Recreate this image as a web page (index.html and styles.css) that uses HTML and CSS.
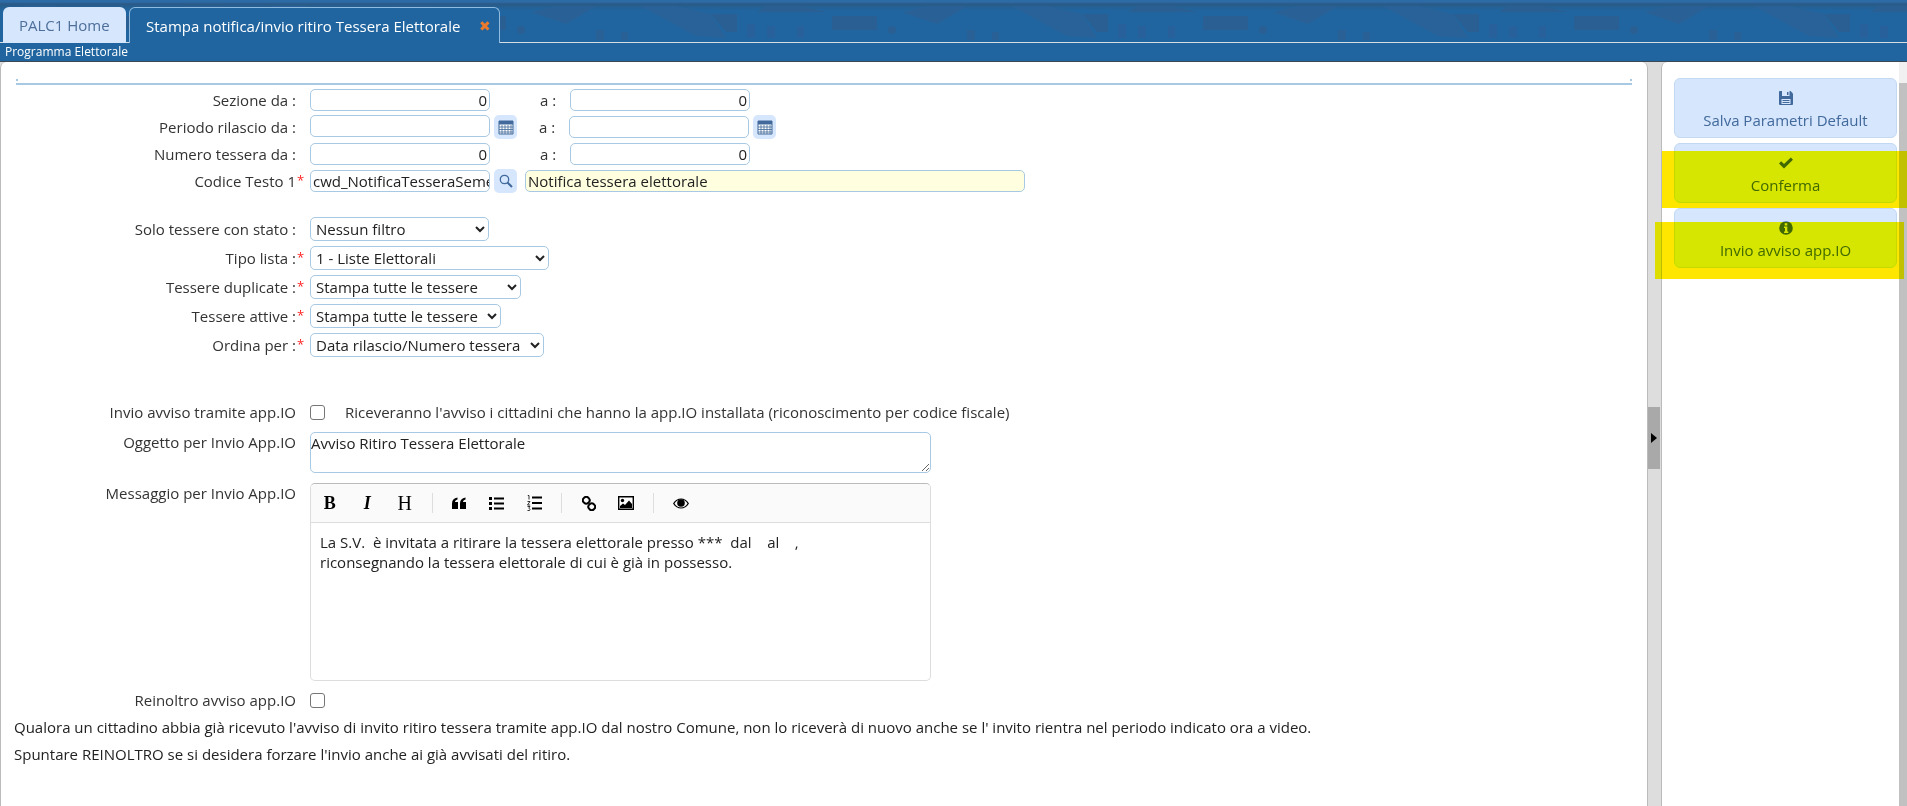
FILE: index.html
```html
<!DOCTYPE html>
<html lang="it">
<head>
<meta charset="utf-8">
<title>Stampa notifica/invio ritiro Tessera Elettorale</title>
<link rel="stylesheet" href="styles.css">
</head>
<body>
<header class="top">
  <svg class="texture" width="1907" height="42" aria-hidden="true">
    <defs>
      <pattern id="houses" width="371" height="42" patternUnits="userSpaceOnUse" x="-5">
        <path d="M20 12 L90 12 L60 5 L30 5 Z" fill="#2a5f92"/>
        <path d="M10 24h8v14h-8zM30 26h8v12h-8zM60 26h7v12h-7z" fill="#28609a"/>
        <path d="M95 16h45v14h-45z" fill="#2a5f92"/>
        <circle cx="155" cy="30" r="4" fill="#2a5f92"/>
        <path d="M165 12 L190 6 L230 6 L200 24 Z" fill="#2a6096"/>
        <path d="M230 30h8v10h-8zM255 32h7v8h-7z" fill="#2a6096"/>
        <path d="M275 6 L310 6 L345 14 L360 38 L330 36 Z" fill="#2a6299"/>
        <path d="M345 14 L371 14 L371 32 L360 32 Z" fill="#2a5f92"/>
      </pattern>
    </defs>
    <rect width="1907" height="42" fill="url(#houses)"/>
  </svg>
  <nav class="tabs">
    <a class="tab tab-home">PALC1 Home</a>
    <a class="tab tab-active">Stampa notifica/invio ritiro Tessera Elettorale<span class="tab-close">✖</span></a>
  </nav>
</header>
<div class="subbar">Programma Elettorale</div>
<main class="workspace">
  <section class="form-panel">
    <div class="rule"></div>
    <div class="rows-top">
      <div class="row">
        <label class="lbl">Sezione da :</label>
        <div class="cell"><input class="inp inp-num" value="0"></div>
        <span class="a">a :</span>
        <input class="inp inp-num" value="0">
      </div>
      <div class="row">
        <label class="lbl">Periodo rilascio da :</label>
        <div class="cell cell-narrow"><input class="inp"><button class="ico-btn"><svg width="16" height="15" viewBox="0 0 16 15"><path d="M1 1h14v13H1z" fill="#fff" stroke="#41699b"/><path d="M1 1h14v3.500H1z" fill="#41699b"/><path d="M1 7h14M1 9.500h14M1 12h14M4 5v9M7 5v9M10 5v9M13 5v9" stroke="#41699b" stroke-width=".8"/></svg></button></div>
        <span class="a">a :</span>
        <input class="inp"><button class="ico-btn"><svg width="16" height="15" viewBox="0 0 16 15"><path d="M1 1h14v13H1z" fill="#fff" stroke="#41699b"/><path d="M1 1h14v3.500H1z" fill="#41699b"/><path d="M1 7h14M1 9.500h14M1 12h14M4 5v9M7 5v9M10 5v9M13 5v9" stroke="#41699b" stroke-width=".8"/></svg></button>
      </div>
      <div class="row">
        <label class="lbl">Numero tessera da :</label>
        <div class="cell"><input class="inp inp-num" value="0"></div>
        <span class="a">a :</span>
        <input class="inp inp-num" value="0">
      </div>
      <div class="row">
        <label class="lbl">Codice Testo 1<span class="star">*</span></label>
        <input class="inp inp-code" value="cwd_NotificaTesseraSemestrale"><button class="ico-btn"><svg width="14" height="14" viewBox="0 0 14 14" fill="none" stroke="#41699b"><circle cx="5.500" cy="5.500" r="4.200" stroke-width="1.300"/><path d="M8.500 8.500L13 13" stroke-width="2"/></svg></button>
        <input class="inp inp-desc" value="Notifica tessera elettorale">
      </div>
    </div>
    <div class="rows-select">
      <div class="row row-sel">
        <label class="lbl">Solo tessere con stato :</label>
        <select class="sel w-filter"><option>Nessun filtro</option></select>
      </div>
      <div class="row row-sel">
        <label class="lbl">Tipo lista :<span class="star">*</span></label>
        <select class="sel w-lista"><option>1 - Liste Elettorali</option></select>
      </div>
      <div class="row row-sel">
        <label class="lbl">Tessere duplicate :<span class="star">*</span></label>
        <select class="sel w-dup"><option>Stampa tutte le tessere</option></select>
      </div>
      <div class="row row-sel">
        <label class="lbl">Tessere attive :<span class="star">*</span></label>
        <select class="sel w-att"><option>Stampa tutte le tessere</option></select>
      </div>
      <div class="row row-sel">
        <label class="lbl">Ordina per :<span class="star">*</span></label>
        <select class="sel w-ord"><option>Data rilascio/Numero tessera</option></select>
      </div>
    </div>
    <div class="row row-check">
      <label class="lbl">Invio avviso tramite app.IO</label>
      <input type="checkbox" class="chk">
      <span class="hint">Riceveranno l'avviso i cittadini che hanno la app.IO installata (riconoscimento per codice fiscale)</span>
    </div>
    <div class="row row-area">
      <label class="lbl">Oggetto per Invio App.IO</label>
      <textarea class="area">Avviso Ritiro Tessera Elettorale</textarea>
    </div>
    <div class="row row-editor">
      <label class="lbl lbl-editor">Messaggio per Invio App.IO</label>
      <div class="editor">
        <div class="toolbar">
          <span class="tb tb-b">B</span>
          <span class="tb tb-i">I</span>
          <span class="tb tb-h">H</span>
          <span class="sep"></span>
          <span class="tb"><svg width="14" height="12" viewBox="0 0 14 12"><path d="M0 6.500C0 3 1.800 1 5.500 0.500V2.500C3.800 3 3 4 3 5H6V12H0ZM8 6.500C8 3 9.800 1 13.500 0.500V2.500C11.800 3 11 4 11 5H14V12H8Z"/></svg></span>
          <span class="tb"><svg width="15" height="13" viewBox="0 0 15 13"><path d="M0 0h3v3H0zM5 0.500h10v2H5zM0 5h3v3H0zM5 5.500h10v2H5zM0 10h3v3H0zM5 10.500h10v2H5z"/></svg></span>
          <span class="tb"><svg width="15" height="16" viewBox="0 0 15 16"><path d="M5 1.500h10v2H5zM5 7h10v2H5zM5 12.500h10v2H5z"/><path d="M.8 0.500h1.200v4M.5 6.500h2.500L.5 10h2.600M.5 11.500h2.500L1.800 13l1.200 1.500-.5 1H.5" fill="none" stroke="#000" stroke-width=".8"/></svg></span>
          <span class="sep"></span>
          <span class="tb"><svg width="14" height="15" viewBox="0 0 14 15" fill="none" stroke="#000" stroke-width="2"><rect x="1" y="1" width="6.500" height="6.500" rx="3" transform="rotate(45 4.250 4.250)"/><rect x="6.500" y="7.500" width="6.500" height="6.500" rx="3" transform="rotate(45 9.750 10.750)"/></svg></span>
          <span class="tb"><svg width="16" height="14" viewBox="0 0 16 14"><path d="M.7.700h14.600v12.600H.7z" fill="#fff" stroke="#000" stroke-width="1.400"/><circle cx="4.500" cy="4.500" r="1.700"/><path d="M2 12V10L5 7.500 7 9 11 4.500 14 8V12Z"/></svg></span>
          <span class="sep"></span>
          <span class="tb"><svg width="16" height="11" viewBox="0 0 16 11"><path d="M0 5.500C2 2 5 .500 8 .500S14 2 16 5.500C14 9 11 10.500 8 10.500S2 9 0 5.500ZM1.500 5.500C3 8 5.500 9.500 8 9.500S13 8 14.500 5.500C13 3 10.500 1.500 8 1.500S3 3 1.500 5.500Z"/><circle cx="8" cy="5" r="3.800"/></svg></span>
        </div>
        <div class="editor-body">La S.V.&nbsp; è invitata a ritirare la tessera elettorale presso ***&nbsp; dal&nbsp;&nbsp;&nbsp; al&nbsp;&nbsp;&nbsp; ,<br>riconsegnando la tessera elettorale di cui è già in possesso.</div>
      </div>
    </div>
    <div class="row row-reinoltro">
      <label class="lbl">Reinoltro avviso app.IO</label>
      <input type="checkbox" class="chk">
    </div>
    <p class="note">Qualora un cittadino abbia già ricevuto l'avviso di invito ritiro tessera tramite app.IO dal nostro Comune, non lo riceverà di nuovo anche se l' invito rientra nel periodo indicato ora a video.</p>
    <p class="note">Spuntare REINOLTRO se si desidera forzare l'invio anche ai già avvisati del ritiro.</p>
  </section>
  <div class="splitter"><div class="handle"><span class="arrow"></span></div></div>
  <aside class="side-panel">
    <button class="action">
      <svg width="14" height="14" viewBox="0 0 14 14"><path d="M0 1a1 1 0 0 1 1-1h10.500L14 2.500V13a1 1 0 0 1-1 1H1a1 1 0 0 1-1-1Z" fill="#41699b"/><path d="M3 0h7.500v5H3z" fill="#d6e6fd"/><path d="M8 1h1.500v3H8z" fill="#41699b"/><path d="M2.500 8h9v5h-9z" fill="#d6e6fd"/><path d="M3.500 9.500h7M3.500 11.500h7" stroke="#41699b"/></svg>
      <span>Salva Parametri Default</span>
    </button>
    <button class="action">
      <svg width="14" height="14" viewBox="0 0 14 11"><path d="M0 6 2.200 3.800 5 6.600 11.800 0 14 2.200 5 11Z" fill="#41699b"/></svg>
      <span>Conferma</span>
    </button>
    <button class="action">
      <svg width="14" height="14" viewBox="0 0 14 14"><circle cx="7" cy="7" r="6.800" fill="#41699b"/><rect x="5.700" y="2.200" width="2.600" height="2.300" fill="#d6e6fd"/><path d="M5 5.600h3.300v5h1v1.300H5v-1.300h1v-3.700H5Z" fill="#d6e6fd"/></svg>
      <span>Invio avviso app.IO</span>
    </button>
    <div class="scroll-track"><div class="scroll-thumb"></div></div>
  </aside>
</main>
<div class="mark mark-one"></div>
<div class="mark mark-two"></div>
</body>
</html>
```

FILE: styles.css
```css
* { box-sizing: border-box; }
html, body { margin: 0; height: 100%; }
body {
  height: 806px;
  overflow: hidden;
  display: flex;
  flex-direction: column;
  background: #fff;
  color: #333;
  font: 15px/20px "Open Sans", sans-serif;
}
.top {
  position: relative;
  height: 43px;
  flex: none;
  background: linear-gradient(#2d6ba6 0, #2d6ba6 2px, #2a5a86 4px, #20659f 10px);
  border-bottom: 1px solid #d5dde0;
}
.texture { position: absolute; left: 0; top: 0; opacity: .9; }
.tabs {
  position: relative;
  display: flex;
  gap: 3px;
  height: 43px;
  padding: 7px 0 0 3px;
}
.tab {
  display: flex;
  align-items: center;
  height: 36px;
  border-radius: 6px 6px 0 0;
}
.tab-home {
  width: 123px;
  padding-left: 16px;
  background: #d6e6fd;
  color: #4d6f99;
}
.tab-active {
  width: 371px;
  padding-left: 16px;
  background: #20659f;
  color: #fff;
  border: 1px solid #8fbbe0;
  border-bottom: 0;
}
.tab-close { margin-left: 19px; color: #ec7a2c; font-size: 14px; }
.subbar {
  flex: none;
  height: 19px;
  padding-left: 5px;
  background: #20659f;
  border-bottom: 1px solid #3c4a55;
  color: #fff;
  font-size: 12px;
  line-height: 18px;
}
.workspace {
  flex: 1;
  display: flex;
  min-height: 0;
  background: #ddd;
}
.form-panel {
  width: 1648px;
  flex: none;
  padding-top: 21px;
  background: #fff;
  border: 1px solid #bbb;
  border-top: 0;
  border-bottom: 0;
  border-radius: 6px 6px 0 0;
}
.rule {
  position: relative;
  height: 2px;
  margin: 0 15px 4px 15px;
  background: #a7c9e3;
}
.rule::before, .rule::after {
  content: "";
  position: absolute;
  top: -4px;
  width: 2px;
  height: 2px;
  background: #a7c9e3;
}
.rule::before { left: 0; }
.rule::after { right: 0; }
.rows-top { display: flex; flex-direction: column; gap: 5px; }
.rows-select { display: flex; flex-direction: column; gap: 5px; margin-top: 25px; }
.row { display: flex; align-items: center; height: 22px; }
.row-sel { height: 24px; }
.lbl {
  position: relative;
  flex: none;
  width: 295px;
  margin-right: 14px;
  text-align: right;
  color: #333;
  white-space: nowrap;
}
.star { position: absolute; left: 100%; top: -1px; margin-left: 1px; color: #f22; font-size: 13px; }
.inp {
  width: 180px;
  height: 22px;
  padding: 0 2px;
  border: 1px solid #a7c9e3;
  border-radius: 5px;
  background: #fff;
  color: #222;
  font: 15px "Open Sans", sans-serif;
  outline: 0;
}
.inp-num { text-align: right; }
.cell { display: flex; width: 230px; flex: none; }
.cell-narrow { width: 229px; }
.a { flex: none; width: 30px; color: #333; }
.ico-btn {
  display: flex;
  align-items: center;
  justify-content: center;
  width: 23px;
  height: 24px;
  margin-left: 4px;
  padding: 0;
  border: 0;
  border-radius: 5px;
  background: #d6e6fd;
}
.inp-code { padding-right: 0; }
.inp-desc {
  width: 500px;
  margin-left: 8px;
  background: #ffffe0;
}
.sel {
  height: 24px;
  padding: 0 0 0 1px;
  border: 1px solid #a7c9e3;
  border-radius: 5px;
  background: #fff;
  color: #222;
  font: 15px "Open Sans", sans-serif;
  outline: 0;
}
.w-filter { width: 179px; }
.w-lista { width: 239px; }
.w-dup { width: 211px; }
.w-att { width: 191px; }
.w-ord { width: 234px; }
.row-check { margin-top: 44px; }
.chk {
  appearance: none;
  flex: none;
  width: 15px;
  height: 15px;
  margin: 0;
  border: 1.500px solid #767676;
  border-radius: 3px;
  background: #fff;
}
.hint { margin-left: 20px; white-space: nowrap; }
.row-area { align-items: flex-start; height: 41px; margin-top: 9px; }
.area {
  display: block;
  width: 621px;
  height: 41px;
  padding: 0;
  border: 1px solid #a7c9e3;
  border-radius: 5px;
  color: #222;
  font: 15px/20px "Open Sans", sans-serif;
  outline: 0;
}
.row-editor { align-items: flex-start; height: auto; margin-top: 10px; }
.lbl-editor { padding-top: 0; }
.editor {
  width: 621px;
  height: 198px;
  border: 1px solid #ddd;
  border-top-color: #bbb;
  border-radius: 5px;
  background: #fff;
}
.toolbar {
  display: flex;
  align-items: center;
  height: 39px;
  border-bottom: 1px solid #ddd;
  border-radius: 5px 5px 0 0;
  background: #fafafa;
}
.tb {
  display: flex;
  align-items: center;
  justify-content: center;
  width: 37.500px;
  height: 30px;
  color: #000;
  font: 18px "Liberation Serif", serif;
}
.tb-b { font-weight: 700; }
.tb-i { font-style: italic; font-weight: 700; }
.tb-h { font-size: 20px; }
.sep { flex: none; width: 1px; height: 20px; margin: 0 8px; background: #ddd; }
.editor-body {
  padding: 9px 9px;
  color: #222;
  white-space: nowrap;
}
.row-reinoltro { margin-top: 8px; }
.note { margin: 0 0 0 13px; height: 27px; line-height: 27px; color: #222; white-space: nowrap; }
.row-reinoltro + .note { margin-top: 3px; }
.splitter { flex: none; width: 13px; display: flex; align-items: center; }
.handle {
  position: relative;
  width: 12px;
  height: 62px;
  margin-top: 8px;
  background: #a9a9a9;
  display: flex;
  align-items: center;
  justify-content: center;
}
.arrow {
  width: 0;
  height: 0;
  border-left: 6px solid #000;
  border-top: 5px solid transparent;
  border-bottom: 5px solid transparent;
}
.side-panel {
  position: relative;
  flex: 1;
  display: flex;
  flex-direction: column;
  gap: 5px;
  padding: 16px 10px 0 12px;
  background: #fff;
  border-left: 1px solid #bbb;
  border-radius: 6px 0 0 0;
}
.action {
  display: flex;
  flex-direction: column;
  align-items: center;
  justify-content: center;
  gap: 5px;
  width: 223px;
  height: 60px;
  padding: 5px 0 0;
  border: 1px solid #c3d9f2;
  border-radius: 6px;
  background: #d6e6fd;
  color: #41699b;
  font: 15px/20px "Open Sans", sans-serif;
}
.scroll-track {
  position: absolute;
  right: 0;
  top: 0;
  bottom: 0;
  width: 8px;
  padding-top: 21px;
  background: #f1f1f1;
}
.scroll-thumb { height: 100%; background: #c1c1c1; }
.mark {
  position: absolute;
  height: 57px;
  background: #ffe600;
  mix-blend-mode: darken;
}
.mark-one { left: 1662px; top: 151px; width: 245px; }
.mark-two { left: 1655px; top: 222px; width: 249px; }
```
